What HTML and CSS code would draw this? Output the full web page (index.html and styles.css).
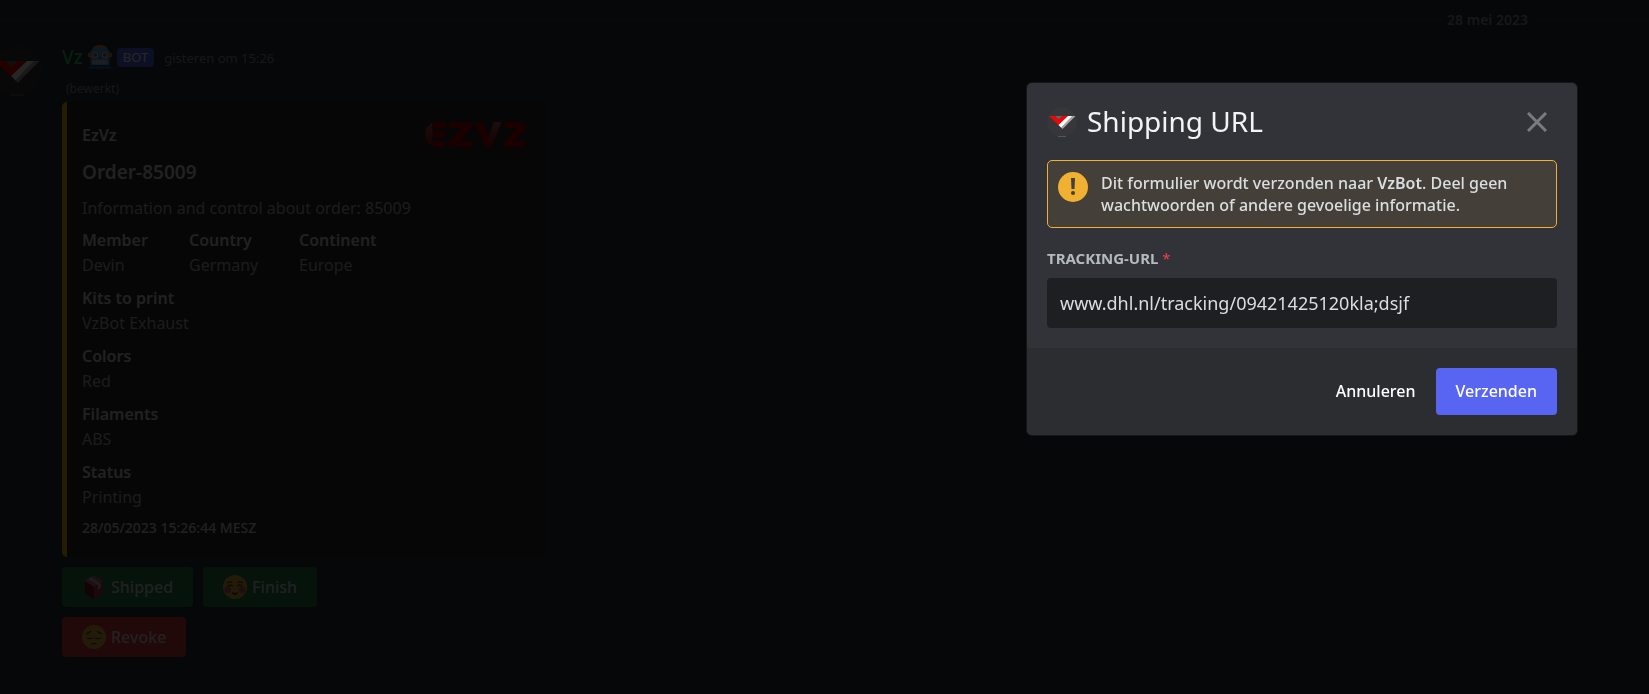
FILE: index.html
```html
<!DOCTYPE html>
<html lang="nl">
<head>
<meta charset="utf-8">
<title>Shipping URL</title>
<link rel="stylesheet" href="styles.css">
</head>
<body>
<svg class="symbols" aria-hidden="true">
  <symbol id="vz-avatar" viewBox="0 0 60 60">
    <circle cx="30" cy="30" r="30" fill="#37373a"/>
    <path d="M16 18H31L23 25Z" fill="#63656a"/>
    <path d="M4 18H16L23 25L31 18H42L24 37Z" fill="#f00505"/>
    <path d="M42 18H53L29 42L23 36Z" fill="#fff"/>
    <path d="M50 18H57L31 44L28 41Z" fill="#a5a5a5"/>
    <path d="M22 59H38" stroke="#55565a" stroke-width="2"/>
  </symbol>
</svg>

<main class="chat">
  <div class="divider"><span class="divider-text">28 mei 2023</span></div>
  <article class="message">
    <svg class="avatar"><use href="#vz-avatar"/></svg>
    <div class="content">
      <header class="author">
        <span class="name">Vz</span>
        <svg class="emoji" viewBox="0 0 36 36" aria-hidden="true">
          <ellipse cx="18" cy="6" rx="11" ry="6" fill="#f4900c"/>
          <ellipse cx="3" cy="15" rx="3" ry="4" fill="#f4900c"/>
          <ellipse cx="33" cy="15" rx="3" ry="4" fill="#f4900c"/>
          <path d="M4 30V9Q10 3 18 3Q26 3 32 9V30Z" fill="#55acee"/>
          <path d="M1 36V33Q1 31 4 31H32Q35 31 35 33V36Z" fill="#226699"/>
          <circle cx="11" cy="15" r="4" fill="#fff"/><circle cx="25" cy="15" r="4" fill="#fff"/>
          <circle cx="11" cy="15" r="3" fill="#dd2e44"/><circle cx="25" cy="15" r="3" fill="#dd2e44"/>
          <path d="M18 17L20 21H16Z" fill="#226699"/>
          <rect x="7" y="23" width="22" height="6" rx="2" fill="#ccd6dd"/>
          <path d="M11 23V29M16 23V29M21 23V29M26 23V29" stroke="#8899a6"/>
        </svg>
        <span class="tag">BOT</span>
        <time class="time">gisteren om 15:26</time>
      </header>
      <div class="edited">(bewerkt)</div>
      <section class="embed">
        <div class="embed-body">
          <div class="embed-author">EzVz</div>
          <h2 class="embed-title">Order-85009</h2>
          <p class="embed-text">Information and control about order: 85009</p>
          <dl class="fields">
            <div><dt>Member</dt><dd>Devin</dd></div>
            <div><dt>Country</dt><dd>Germany</dd></div>
            <div><dt>Continent</dt><dd>Europe</dd></div>
            <div class="wide"><dt>Kits to print</dt><dd>VzBot Exhaust</dd></div>
            <div class="wide"><dt>Colors</dt><dd>Red</dd></div>
            <div class="wide"><dt>Filaments</dt><dd>ABS</dd></div>
            <div class="wide"><dt>Status</dt><dd>Printing</dd></div>
          </dl>
          <footer class="embed-footer">28/05/2023 15:26:44 MESZ</footer>
        </div>
        <svg class="logo" viewBox="0 0 100 25" role="img" aria-label="EZVZ">
          <defs>
            <linearGradient id="shade" x1="0" y1="0" x2="0" y2="1"><stop offset="0" stop-color="#b06060"/><stop offset="1" stop-color="#b00000"/></linearGradient>
          </defs>
          <path d="M7 0V25L0 18V7Z" fill="url(#shade)"/>
          <path d="M7 0H20V6H7ZM7 9H19V15H7ZM7 19H20V25H7Z" fill="#b80000"/>
          <path d="M24 0H46V6L34 19H46V25H24V19L36 6H24Z" fill="#b80000"/>
          <path d="M49 0H57L65 18L60 25Z" fill="#b80000"/>
          <path d="M68 0H76L66 25H60Z" fill="url(#shade)"/>
          <path d="M79 0H97L100 4V7L89 19H100V22L97 25H79V19L91 6H79Z" fill="#b80000"/>
        </svg>
      </section>
      <div class="actions">
        <button class="action" type="button">
          <svg class="emoji" viewBox="0 0 36 36" aria-hidden="true">
            <path d="M18 0L32 9V27L18 36L4 27V9Z" fill="#a8404a"/>
            <path d="M4 9L18 18V36L4 27Z" fill="#7d1426"/>
            <path d="M18 0L32 9L18 18L4 9Z" fill="#c46a74"/>
            <path d="M9 6L24 15V22L28 19V13L14 3Z" fill="#b8c2dd"/>
          </svg>Shipped</button>
        <button class="action" type="button">
          <svg class="emoji" viewBox="0 0 36 36" aria-hidden="true">
            <circle cx="18" cy="18" r="18" fill="#ebb43c"/>
            <circle cx="7" cy="22" r="5" fill="#d2605a"/><circle cx="29" cy="22" r="5" fill="#d2605a"/>
            <path d="M7 17Q11 13 15 17M21 17Q25 13 29 17M6 12Q10 9 14 11M22 11Q26 9 30 12" fill="none" stroke="#664500" stroke-width="2"/>
            <path d="M13 25Q18 28 23 25Q22 30 18 30Q14 30 13 25Z" fill="#664500"/>
          </svg>Finish</button>
      </div>
      <div class="actions">
        <button class="action danger" type="button">
          <svg class="emoji" viewBox="0 0 36 36" aria-hidden="true">
            <circle cx="18" cy="18" r="18" fill="#ebb43c"/>
            <path d="M6 13Q11 13 13 9M30 13Q25 13 23 9M8 19Q12 22 16 19M20 19Q24 22 28 19M14 28H22" fill="none" stroke="#664500" stroke-width="2"/>
          </svg>Revoke</button>
      </div>
    </div>
  </article>
</main>

<div class="backdrop">
  <form class="modal" role="dialog" aria-labelledby="modal-title">
    <div class="modal-body">
      <header class="modal-header">
        <svg class="modal-avatar"><use href="#vz-avatar"/></svg>
        <h1 id="modal-title" class="modal-title">Shipping URL</h1>
        <button class="close" type="button" aria-label="Sluiten">
          <svg viewBox="0 0 20 20" width="20" height="20"><path d="M1 1L19 19M19 1L1 19" stroke="currentColor" stroke-width="3"/></svg>
        </button>
      </header>
      <div class="notice">
        <svg class="notice-icon" viewBox="0 0 30 30" aria-hidden="true">
          <circle cx="15" cy="15" r="15" fill="#f0b132"/>
          <path d="M13 6H17L16.500 17H13.500Z" fill="#443f38"/><circle cx="15" cy="21" r="2" fill="#443f38"/>
        </svg>
        <p class="notice-text">Dit formulier wordt verzonden naar <strong>VzBot</strong>. Deel geen wachtwoorden of andere gevoelige informatie.</p>
      </div>
      <label class="label" for="tracking">TRACKING-URL <span class="required">*</span></label>
      <input class="field" id="tracking" type="text" value="www.dhl.nl/tracking/09421425120kla;dsjf">
    </div>
    <footer class="modal-footer">
      <button class="cancel" type="button">Annuleren</button>
      <button class="submit" type="submit">Verzenden</button>
    </footer>
  </form>
</div>
</body>
</html>
```
FILE: styles.css
```css
* { box-sizing: border-box; }
body {
  margin: 0;
  min-height: 100vh;
  background: #2a3138;
  color: #dbdee1;
  font-family: "Noto Sans", sans-serif;
  font-size: 16px;
  line-height: 25px;
  overflow-x: hidden;
}
h1, h2, p, dl, dd { margin: 0; }
button, input { font: inherit; color: inherit; border: 0; margin: 0; }
svg { display: block; flex: none; }
.symbols { position: absolute; width: 0; height: 0; }

.divider {
  display: flex;
  align-items: center;
  gap: 5px;
  height: 39px;
  color: #949ba4;
  font-size: 14px;
  font-weight: 600;
}
.divider::before, .divider::after { content: ""; height: 1px; background: #3f4147; }
.divider::before { flex: 1; }
.divider::after { width: 116px; }

.message { display: flex; gap: 20px; margin-left: -8px; }
.avatar { width: 50px; height: 50px; margin-top: 7px; }
.author { display: flex; align-items: center; gap: 5px; height: 36px; }
.name { color: #2ecc71; font-size: 19px; font-weight: 500; }
.emoji { width: 24px; height: 24px; }
.tag {
  padding: 0 6px;
  border-radius: 4px;
  background: #5865f2;
  color: #fff;
  font-size: 13px;
  line-height: 19px;
}
.time { margin-left: 5px; padding-top: 2px; color: #949ba4; font-size: 13px; }
.edited { padding-left: 4px; color: #949ba4; font-size: 12px; line-height: 27px; }
.embed {
  display: flex;
  align-items: flex-start;
  justify-content: space-between;
  width: 484px;
  padding: 20px 20px 17px 15px;
  border-left: 5px solid #f1c40f;
  border-radius: 5px;
  background: #2a2a2a;
}
.embed-author { padding-top: 1px; font-weight: 600; }
.embed-title { margin-top: 12px; font-size: 19px; font-weight: 600; line-height: 25px; }
.embed-text { margin: 11px 0 7px; color: #b5bac1; }
.fields { display: grid; grid-template-columns: 97px 100px auto; gap: 8px 10px; }
.wide { grid-column: 1 / -1; }
dt { font-weight: 600; }
dd { color: #b5bac1; }
.embed-footer { margin-top: 5px; font-size: 14px; font-weight: 500; }
.logo { width: 101px; height: 25px; }
.actions { display: flex; gap: 10px; margin-top: 10px; }
.action {
  display: flex;
  align-items: center;
  gap: 5px;
  height: 40px;
  padding: 0 20px;
  border-radius: 4px;
  background: #248046;
  font-weight: 500;
}
.danger { background: #da373c; }

.backdrop {
  position: fixed;
  inset: 0;
  display: flex;
  align-items: flex-start;
  justify-content: flex-end;
  padding: 83px 72px 0 0;
  background: rgba(0, 0, 0, 0.85);
}
.modal {
  width: 550px;
  border-radius: 5px;
  background: #313338;
  box-shadow: 0 0 0 1px rgba(40, 42, 46, 0.4);
  overflow: hidden;
}
.modal-body { padding: 20px; }
.modal-header { display: flex; align-items: center; height: 37px; margin-bottom: 20px; }
.modal-avatar { width: 30px; height: 30px; }
.modal-title { margin-left: 10px; color: #f2f3f5; font-size: 28px; font-weight: 400; line-height: 37px; }
.close { margin-left: auto; padding: 10px; background: none; color: #797b80; }
.notice {
  display: flex;
  gap: 13px;
  padding: 11px 10px;
  border: 1px solid #f0b132;
  border-radius: 5px;
  background: #443f38;
}
.notice-icon { width: 30px; height: 30px; }
.notice-text { font-weight: 500; line-height: 22px; }
.notice-text strong { font-weight: 600; }
.label {
  display: block;
  margin: 20px 0 10px;
  color: #b5bac1;
  font-size: 15px;
  font-weight: 700;
  line-height: 20px;
}
.required { color: #f23f42; font-weight: 400; }
.field {
  display: block;
  width: 100%;
  height: 50px;
  padding: 0 13px;
  border-radius: 4px;
  background: #1e1f22;
  font-size: 18px;
}
.modal-footer { display: flex; justify-content: flex-end; padding: 20px; background: #2b2d31; }
.cancel, .submit { height: 47px; padding: 0 20px; border-radius: 4px; color: #fff; font-weight: 500; }
.cancel { background: none; }
.submit { background: #5865f2; }
```
